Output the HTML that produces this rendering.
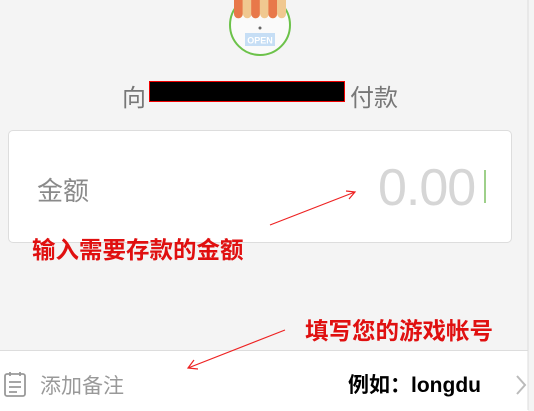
<!DOCTYPE html>
<html><head><meta charset="utf-8"><style>
body{margin:0;width:534px;height:410px;background:#f4f4f4;position:relative;overflow:hidden;font-family:"Liberation Sans","Noto Sans CJK SC",sans-serif}
.a{position:absolute;white-space:nowrap}
</style></head><body>
<svg class="a" style="left:228px;top:-6px" width="64" height="64" viewBox="0 0 64 64">
<circle cx="32" cy="31" r="30" fill="#fafafa" stroke="#6cc24a" stroke-width="2"/>
<path d="M6 6h52v14a4.3 4.3 0 0 1-8.6 0a4.3 4.3 0 0 1-8.6 0a4.3 4.3 0 0 1-8.6 0a4.3 4.3 0 0 1-8.6 0a4.3 4.3 0 0 1-8.6 0a4.3 4.3 0 0 1-8.6 0z" fill="#f0c890"/>
<path d="M6 6h8.6v14a4.3 4.3 0 0 1-8.6 0zM23.2 6h8.6v14a4.3 4.3 0 0 1-8.6 0zM40.4 6h8.6v14a4.3 4.3 0 0 1-8.6 0z" fill="#e8784a"/>
<circle cx="32" cy="34" r="1.5" fill="#666"/>
<rect x="17" y="39" width="30" height="13" fill="#c6def5"/>
<text x="32" y="49.5" font-size="9" text-anchor="middle" fill="#fff" font-weight="bold">OPEN</text>
</svg>
<div class="a" style="left:122px;top:78px;font-size:24px;color:#777">向<span style="display:inline-block;width:204px"></span>付款</div>
<div class="a" style="left:149px;top:81px;width:196px;height:21px;background:#000;border:1px solid #e00;box-sizing:border-box"></div>
<div class="a" style="left:8px;top:130px;width:504px;height:113px;background:#fff;border:1px solid #ddd;border-radius:5px;box-sizing:border-box"></div>
<div class="a" style="left:37px;top:171px;font-size:26px;color:#8a8a8a">金额</div>
<div class="a" style="left:378px;top:158px;font-size:52px;color:#d6d6d6;letter-spacing:-1px">0.00</div>
<div class="a" style="left:484px;top:170px;width:2px;height:33px;background:#9ed08a"></div>
<div class="a" style="left:32px;top:231px;font-size:23.5px;color:#e01010;font-weight:bold">输入需要存款的金额</div>
<div class="a" style="left:305px;top:312px;font-size:23.5px;color:#e01010;font-weight:bold">填写您的游戏帐号</div>
<div class="a" style="left:0;top:350px;width:528px;height:60px;background:#fff;border-top:1px solid #ddd"></div>
<svg class="a" style="left:0;top:0" width="534" height="410">
<g stroke="#e22" stroke-width="1.2" fill="none">
<path d="M270 225L355 192M346 191L355 192L349 199"/>
<path d="M285 330L188 368M194 360L188 368L198 369"/>
</g>
<g stroke="#ddd"><path d="M528 0V410"/></g>
</svg>
<svg class="a" style="left:3px;top:371px" width="24" height="27" viewBox="0 0 24 27"><rect x="2" y="3" width="20" height="22" rx="2" fill="none" stroke="#999" stroke-width="1.8"/><path d="M7 1v4M17 1v4M6 11h12M6 16h12M6 21h8" stroke="#999" stroke-width="1.8"/></svg>
<div class="a" style="left:40px;top:370px;font-size:21px;color:#999">添加备注</div>
<div class="a" style="left:348px;top:369px;font-size:21px;color:#000;font-weight:bold">例如：longdu</div>
<svg class="a" style="left:514px;top:373px" width="14" height="24"><path d="M3 3L11 12L3 21" stroke="#bbb" stroke-width="2" fill="none"/></svg>
</body></html>
